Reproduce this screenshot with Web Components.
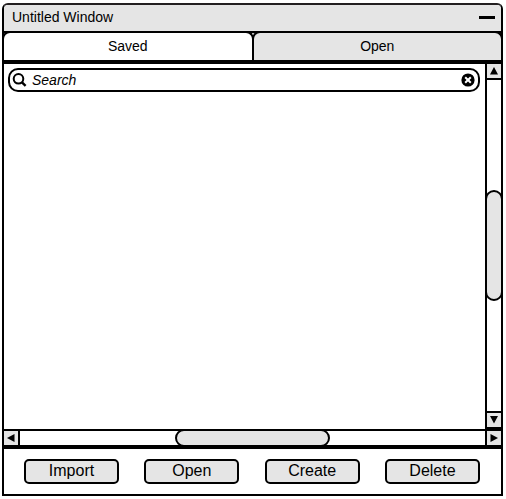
<!DOCTYPE html>
<html lang="en">
<head>
<meta charset="utf-8">
<meta name="viewport" content="width=device-width, initial-scale=1">
<title>Untitled Window</title>
<style>
  :root { --line: #000; --face: #e5e5e5; --paper: #fff; }
  body {
    margin: 0; box-sizing: border-box; min-height: 100vh;
    padding: 3px 3px 3px 2px; display: flex; background: #fff; color: #000;
    font-family: "Liberation Sans", Arial, sans-serif; font-size: 14px;
  }
</style>
</head>
<body>
<wire-window heading="Untitled Window">
  <wire-tabs slot="tabs" labels="Saved,Open"></wire-tabs>
  <wire-scroll-area>
    <wire-search label="Search"></wire-search>
  </wire-scroll-area>
  <wire-button slot="actions">Import</wire-button>
  <wire-button slot="actions">Open</wire-button>
  <wire-button slot="actions">Create</wire-button>
  <wire-button slot="actions">Delete</wire-button>
</wire-window>

<script>
class WireElement extends HTMLElement {
  connectedCallback() {
    if (!this.shadowRoot) {
      this.attachShadow({ mode: "open" }).innerHTML =
        `<style>*{box-sizing:border-box} button{font:inherit;color:inherit;margin:0;padding:0}</style>` + this.render();
      this.ready();
    }
  }
  ready() {}
}

customElements.define("wire-window", class extends WireElement {
  render() {
    return `<style>
      :host { display: flex; flex-direction: column; flex: 1; box-sizing: border-box; min-width: 0;
        border: 2px solid var(--line); border-top-color: #231f20; border-radius: 6px 6px 0 0; background: var(--paper); }
      header { display: flex; align-items: center; justify-content: space-between; height: 26px;
        padding: 0 6px 2px 8px; background: var(--face); border-radius: 4px 4px 0 0; }
      h1 { margin: 0; font-size: 14px; line-height: 20px; font-weight: 400; }
      button { width: 16px; height: 16px; border: 0; background: none; display: flex; align-items: center; }
      button::before { content: ""; width: 100%; height: 3px; background: var(--line); }
      main { display: flex; flex: 1; min-height: 0; }
      footer { display: flex; justify-content: space-between; border-top: 4px solid var(--line); padding: 10px 21px 10px 20px; }
    </style>
    <header><h1>${this.getAttribute("heading")}</h1><button type="button" aria-label="Minimize"></button></header>
    <slot name="tabs"></slot>
    <main><slot></slot></main>
    <footer><slot name="actions"></slot></footer>`;
  }
});

customElements.define("wire-tabs", class extends WireElement {
  render() {
    const tabs = this.getAttribute("labels").split(",")
      .map((t, i) => `<button type="button" role="tab" aria-selected="${i === 0}">${t}</button>`).join("");
    return `<style>
      :host { display: block; border-bottom: 4px solid var(--line); background: var(--face); }
      div { display: flex; margin: 0 -2px; background: var(--face); box-shadow: inset 0 0 0 2px var(--line); }
      button { flex: 1; height: 29px; border: 2px solid var(--line); border-bottom: 0;
        border-radius: 8px 8px 0 0; background: var(--face); line-height: 20px; padding-bottom: 1px; }
      button + button { margin-left: -2px; }
      button[aria-selected="true"] { background: var(--paper); }
    </style><div role="tablist">${tabs}</div>`;
  }
  ready() {
    const tabs = [...this.shadowRoot.querySelectorAll("button")];
    tabs.forEach(t => t.addEventListener("click", () =>
      tabs.forEach(o => o.setAttribute("aria-selected", String(o === t)))));
  }
});

customElements.define("wire-scrollbar", class extends WireElement {
  render() {
    const v = this.getAttribute("direction") === "vertical";
    const arrows = v ? ["M1 8.5 5 1 9 8.5Z", "M1 1 9 1 5 8.5Z"] : ["M1 5 8.5 1 8.5 9Z", "M1.5 1 9 5 1.5 9Z"];
    const arrow = (d, name) => `<button type="button" aria-label="${name}"><svg viewBox="0 0 10 10" width="10" height="10"><path d="${d}"/></svg></button>`;
    return `<style>
      :host { display: flex; flex-direction: ${v ? "column" : "row"}; background: var(--paper); }
      button { flex: none; border: 0; width: ${v ? "auto" : "14px"}; height: 14px; background: var(--face);
        display: flex; align-items: center; justify-content: center; }
      .track { flex: 1; display: flex; flex-direction: inherit; min-width: 0; min-height: 0;
        border: 0 solid var(--line); border-width: ${v ? "2px 0" : "0 2px"}; }
      .track::before, .track::after { content: ""; flex: 1 1 4px; }
      .thumb { flex: 1 1 4px; margin: ${v ? "0 -2px" : "-2px 0"}; border: 2px solid var(--line); border-radius: 9px; background: var(--face); }
    </style>
    ${arrow(arrows[0], v ? "Scroll up" : "Scroll left")}
    <div class="track" role="scrollbar" aria-orientation="${v ? "vertical" : "horizontal"}" aria-valuenow="50"><div class="thumb"></div></div>
    ${arrow(arrows[1], v ? "Scroll down" : "Scroll right")}`;
  }
});

customElements.define("wire-scroll-area", class extends WireElement {
  render() {
    return `<style>
      :host { flex: 1; min-width: 0; display: grid; gap: 2px; background: var(--line);
        grid-template: minmax(0, 1fr) 14px / minmax(0, 1fr) 14px; }
      .view { background: var(--paper); padding: 4px 5px 4px 4px; }
      [direction="vertical"] { grid-column: 2; grid-row: 1; margin-bottom: 2px; }
      [direction="horizontal"] { grid-column: 1 / 3; grid-row: 2; }
    </style>
    <div class="view"><slot></slot></div>
    <wire-scrollbar direction="vertical"></wire-scrollbar>
    <wire-scrollbar direction="horizontal"></wire-scrollbar>`;
  }
});

customElements.define("wire-search", class extends WireElement {
  render() {
    const label = this.getAttribute("label");
    return `<style>
      :host { display: flex; align-items: center; box-sizing: border-box; height: 24px; gap: 2px;
        border: 2px solid var(--line); border-radius: 10px; padding: 0 3px 0 2px; background: var(--paper); }
      svg { display: block; flex: none; }
      input { flex: 1; min-width: 0; height: 20px; padding: 0 2px; border: 0; outline: 0; background: none;
        font: italic 14px/20px "Liberation Sans", Arial, sans-serif; color: #000; }
      input::placeholder { color: #000; opacity: 1; }
      button { border: 0; background: none; width: 14px; height: 14px; }
    </style>
    <svg width="16" height="16" viewBox="0 0 16 16" fill="none" stroke="#000"><circle cx="6.5" cy="6.8" r="4.8" stroke-width="2"/><path d="M10 10.3 13.6 13.8" stroke-width="2.4"/></svg>
    <input type="text" aria-label="${label}" placeholder="${label}">
    <button type="button" aria-label="Clear"><svg width="14" height="14" viewBox="0 0 14 14"><circle cx="7" cy="7" r="6.6"/><path d="M4.2 4.2 9.8 9.8M9.8 4.2 4.2 9.8" stroke="#fff" stroke-width="2"/></svg></button>`;
  }
  ready() {
    const input = this.shadowRoot.querySelector("input");
    this.shadowRoot.querySelector("button").addEventListener("click", () => { input.value = ""; input.focus(); });
  }
});

customElements.define("wire-button", class extends WireElement {
  render() {
    return `<style>
      :host { display: block; flex: 0 1 95px; min-width: 0; }
      button { display: block; width: 100%; height: 25px; border: 2px solid var(--line); border-radius: 5px;
        background: var(--face); font-size: 16px; line-height: 20px; padding-bottom: 1px; }
    </style><button type="button"><slot></slot></button>`;
  }
});
</script>
</body>
</html>
